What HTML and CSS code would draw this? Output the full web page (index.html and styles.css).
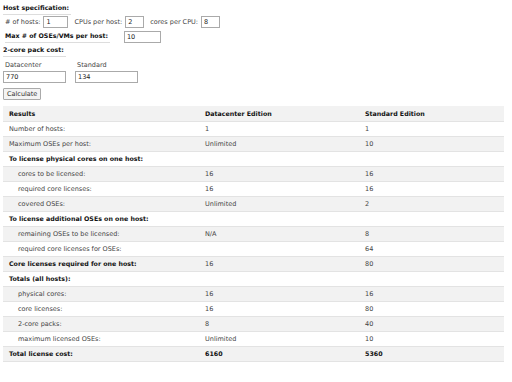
FILE: index.html
```html
<!DOCTYPE html>
<html lang="en">
<head>
    <meta charset="UTF-8">
    <title>License Calculator</title>
    <link rel="stylesheet" href="styles.css">
</head>
<body>
    <div class="spec">
        <h3 class="legend">Host specification:</h3>
        <div class="line">
            <label>#&nbsp;of hosts:</label>
            <input type="text" class="small" value="1">
            <label>CPUs per host:</label>
            <input type="text" class="tiny" value="2">
            <label>cores per CPU:</label>
            <input type="text" class="tiny" value="8">
        </div>
        <div class="line">
            <h3 class="legend inline">Max # of OSEs/VMs per host:</h3>
            <input type="text" class="mid" value="10">
        </div>
        <h3 class="legend">2-core pack cost:</h3>
        <div class="costs">
            <div class="cost">
                <label>Datacenter</label>
                <input type="text" class="wide" value="770">
            </div>
            <div class="cost">
                <label>Standard</label>
                <input type="text" class="wide" value="134">
            </div>
        </div>
        <button type="button">Calculate</button>
    </div>

    <table class="results">
        <colgroup>
            <col class="c1"><col class="c2"><col class="c3">
        </colgroup>
        <thead>
            <tr><th>Results</th><th>Datacenter Edition</th><th>Standard Edition</th></tr>
        </thead>
        <tbody>
            <tr><td>Number of hosts:</td><td>1</td><td>1</td></tr>
            <tr><td>Maximum OSEs per host:</td><td>Unlimited</td><td>10</td></tr>
            <tr class="group"><td>To license physical cores on one host:</td><td></td><td></td></tr>
            <tr><td class="sub">cores to be licensed:</td><td>16</td><td>16</td></tr>
            <tr><td class="sub">required core licenses:</td><td>16</td><td>16</td></tr>
            <tr><td class="sub">covered OSEs:</td><td>Unlimited</td><td>2</td></tr>
            <tr class="group"><td>To license additional OSEs on one host:</td><td></td><td></td></tr>
            <tr><td class="sub">remaining OSEs to be licensed:</td><td>N/A</td><td>8</td></tr>
            <tr><td class="sub">required core licenses for OSEs:</td><td></td><td>64</td></tr>
            <tr class="group"><td>Core licenses required for one host:</td><td>16</td><td>80</td></tr>
            <tr class="group"><td>Totals (all hosts):</td><td></td><td></td></tr>
            <tr><td class="sub">physical cores:</td><td>16</td><td>16</td></tr>
            <tr><td class="sub">core licenses:</td><td>16</td><td>80</td></tr>
            <tr><td class="sub">2-core packs:</td><td>8</td><td>40</td></tr>
            <tr><td class="sub">maximum licensed OSEs:</td><td>Unlimited</td><td>10</td></tr>
            <tr class="total"><td>Total license cost:</td><td>6160</td><td>5360</td></tr>
        </tbody>
    </table>
</body>
</html>
```

FILE: styles.css
```css
body {
    font-family: "DejaVu Sans", Verdana, sans-serif;
    font-size: 6.5px;
    color: #444;
    background-color: #fff;
    margin: 2px 8px 0 3px;
}
.legend {
    display: inline-block;
    font-size: 6.3px;
    font-weight: bold;
    color: #111;
    margin: 0;
    padding: 2px 2px 3px 0;
    border-bottom: 1px solid #ddd;
}
.line {
    display: flex;
    align-items: center;
    gap: 3px;
    padding: 1px 2px 1px;
}
.line label + input + label {
    margin-left: 3px;
}
.line .inline {
    margin-right: 11px;
}
input {
    font-family: "DejaVu Sans", Verdana, sans-serif;
    font-size: 6.5px;
    color: #222;
    height: 12px;
    padding: 0 2px;
    border: 1px solid #aaa;
    box-sizing: border-box;
    margin: 0;
}
.tiny { width: 19px; }
.small { width: 25px; }
.mid { width: 37px; }
.wide { width: 63px; }
.costs {
    display: flex;
    gap: 9px;
    margin-top: 4px;
}
.cost {
    display: flex;
    flex-direction: column;
    gap: 2px;
}
.cost label {
    margin-left: 2px;
}
button {
    font-family: "DejaVu Sans", Verdana, sans-serif;
    font-size: 6.5px;
    color: #333;
    background-color: #f4f4f4;
    border: 1px solid #aaa;
    border-radius: 1px;
    height: 12px;
    padding: 0 3px;
    margin-top: 5px;
}
.results {
    width: 501px;
    table-layout: fixed;
    border-collapse: collapse;
    margin-top: 6px;
}
.c1 { width: 196px; }
.c2 { width: 160px; }
.results th, .results td {
    text-align: left;
    height: 15px;
    padding: 0 6px;
    border-bottom: 1px solid #e3e3e3;
    box-sizing: border-box;
}
.results th {
    font-size: 6.3px;
    background-color: #f2f2f2;
    color: #111;
}
.results tbody tr:nth-child(even) td {
    background-color: #f2f2f2;
}
.results .sub {
    padding-left: 15px;
}
.group td, .total td {
    font-size: 6.3px;
    font-weight: bold;
    color: #111;
}
.group td + td {
    font-size: 6.5px;
    font-weight: normal;
    color: #444;
}
```
